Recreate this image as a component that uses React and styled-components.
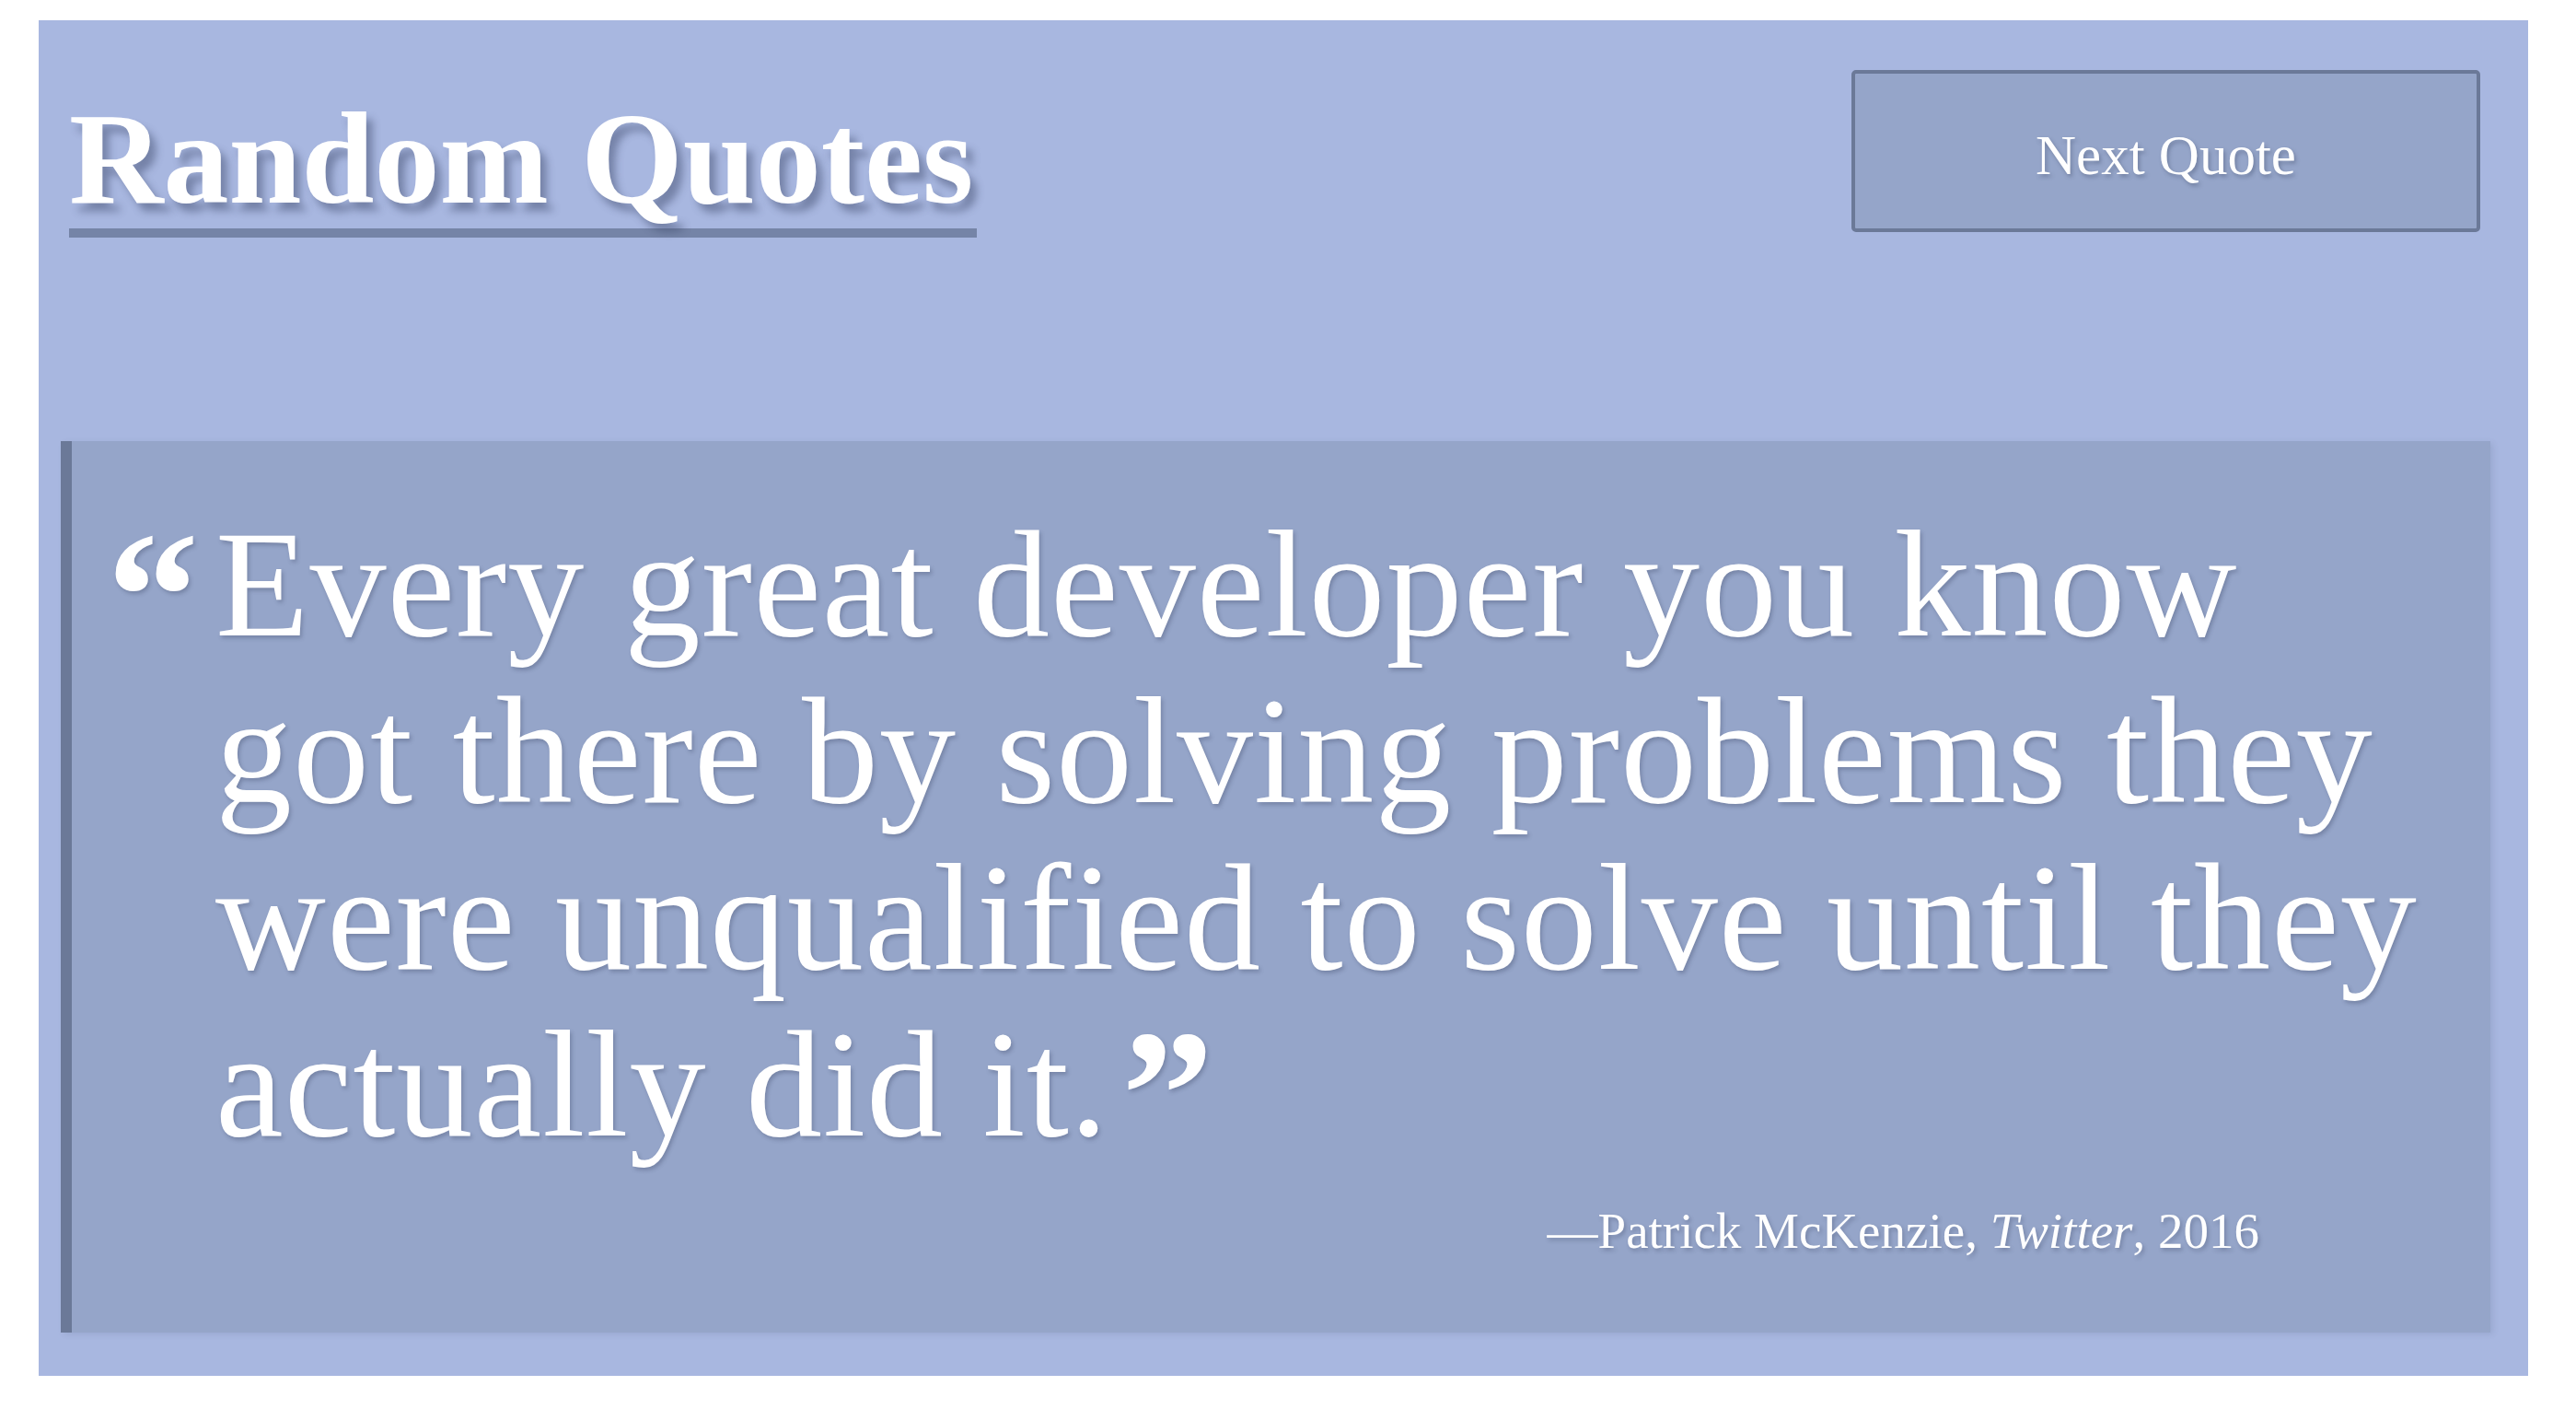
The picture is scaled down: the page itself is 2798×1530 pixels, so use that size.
import React from "react";
import styled, { createGlobalStyle } from "styled-components";

const GlobalStyle = createGlobalStyle`
    html, body {
        margin: 0;
        padding: 0;
        background: #ffffff;
    }

    body {
        font-family: "Liberation Serif", "Times New Roman", serif;
    }
`;

const quote = {
    text: "Every great developer you know got there by solving problems they were unqualified to solve until they actually did it.",
    author: "Patrick McKenzie",
    source: "Twitter",
    year: "2016",
};

const App = () => {
    return (
        <Page>
            <GlobalStyle />
            <Board>
                <Header>
                    <Title>Random Quotes</Title>
                    <NextButton type="button">Next Quote</NextButton>
                </Header>
                <Card>
                    <QuoteRow>
                        <OpenMark>“</OpenMark>
                        <QuoteText>
                            {quote.text}<CloseMark>”</CloseMark>
                        </QuoteText>
                    </QuoteRow>
                    <Attribution>
                        —{quote.author}, <Source>{quote.source}</Source>, {quote.year}
                    </Attribution>
                </Card>
            </Board>
        </Page>
    );
};

const Page = styled.div`
    padding: 22px 52px 36px 42px;
`;

const Board = styled.main`
    display: flex;
    flex-direction: column;
    background-color: #a8b7e0;
    padding: 0 41px 47px 24px;
`;

const Header = styled.header`
    display: flex;
    flex-direction: row;
    align-items: flex-start;
    justify-content: space-between;
    padding: 54px 11px 0 9px;
`;

const Title = styled.h1`
    margin: 25px 0 0;
    padding: 0 4px 5px 0;
    font-family: "Liberation Serif", "Times New Roman", serif;
    font-size: 142px;
    font-weight: 700;
    line-height: 1;
    color: #ffffff;
    border-bottom: 10px solid #7584a7;
    text-shadow: 7px 9px 8px rgba(55, 66, 100, 0.45);
`;

const NextButton = styled.button`
    display: flex;
    align-items: center;
    justify-content: center;
    width: 683px;
    height: 176px;
    padding: 10px 0 0;
    background-color: #95a5c9;
    border: 4px solid #6b7998;
    border-radius: 5px;
    color: #ffffff;
    font-family: "Liberation Serif", "Times New Roman", serif;
    font-size: 61px;
    text-shadow: 2px 3px 4px rgba(50, 60, 90, 0.35);
    cursor: pointer;
`;

const Card = styled.section`
    display: flex;
    flex-direction: column;
    margin-top: 221px;
    padding: 65px 0 77px 38px;
    background-color: #95a5c9;
    border-left: 12px solid #6b7998;
    box-shadow: 3px 2px 6px rgba(60, 70, 100, 0.12);
    color: #ffffff;
`;

const QuoteRow = styled.div`
    display: flex;
    flex-direction: row;
    align-items: flex-start;
    font-size: 166px;
    line-height: 181px;
    text-shadow: 2px 3px 4px rgba(50, 60, 90, 0.3);
`;

const OpenMark = styled.span`
    flex: 0 0 118px;
    padding-top: 12px;
    font-size: 200px;
    font-weight: 700;
`;

const QuoteText = styled.p`
    width: 2420px;
    margin: 0;
    letter-spacing: 1px;
`;

const CloseMark = styled.span`
    margin-left: 14px;
    font-size: 200px;
    font-weight: 700;
    line-height: 0;
    vertical-align: -23px;
`;

const Attribution = styled.p`
    margin: 36px 0 0;
    padding-right: 251px;
    text-align: right;
    font-size: 55px;
    line-height: 66px;
    text-shadow: 2px 3px 4px rgba(50, 60, 90, 0.3);
`;

const Source = styled.cite`
    font-style: italic;
`;

export default App;
